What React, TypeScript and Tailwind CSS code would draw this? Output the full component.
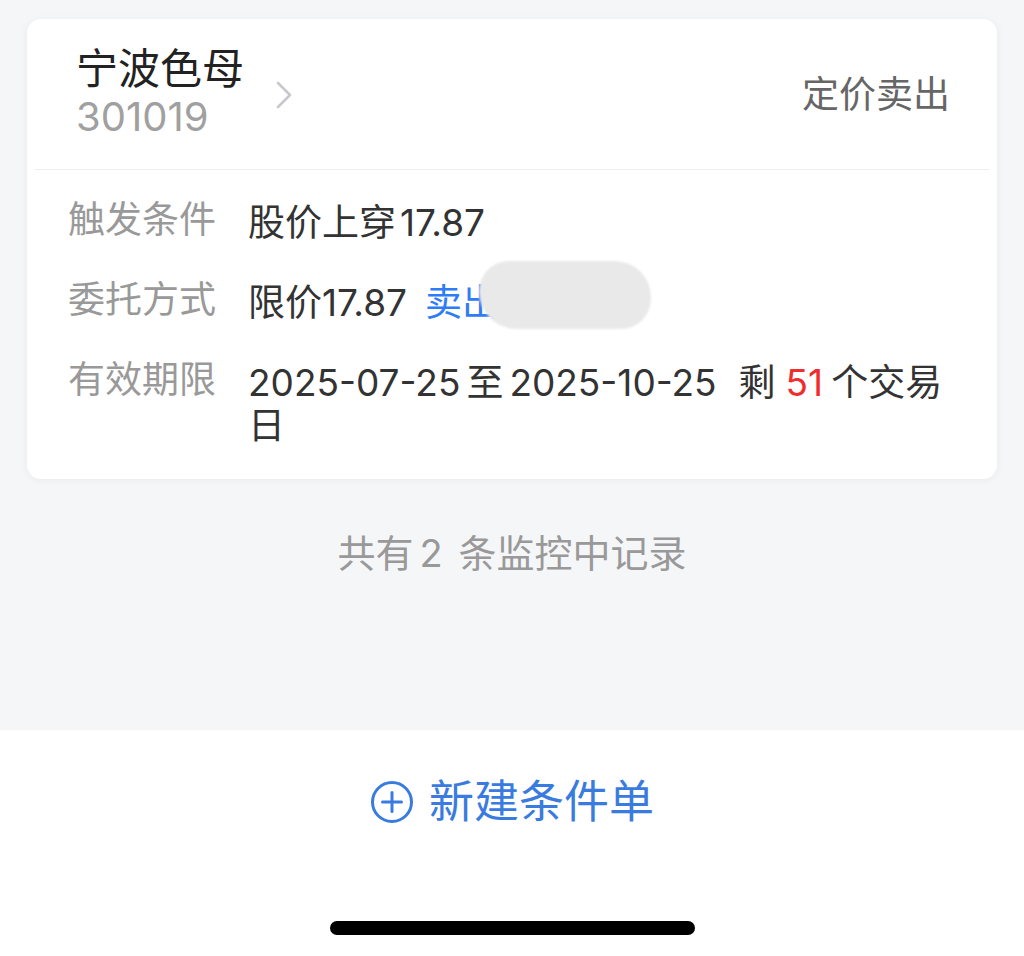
const FONT = "font-['Inter','Noto_Sans_CJK_SC',sans-serif]";

function InfoRow({ label, children }: { label: string; children: React.ReactNode }) {
  return (
    <div className="flex items-start">
      <div className="w-[180px] shrink-0 text-[37px] leading-[44px] text-[#999]">{label}</div>
      <div className="min-w-0 flex-1 pt-[3px] text-[37px] leading-[43px] text-[#333]">{children}</div>
    </div>
  );
}

function PlusCircle() {
  return (
    <svg width="44" height="44" viewBox="0 0 44 44" fill="none" stroke="#3a7be0" strokeWidth="3" strokeLinecap="round">
      <circle cx="22" cy="22" r="19.5" />
      <path d="M22 12.5v19M12.5 22h19" />
    </svg>
  );
}

export default function App() {
  return (
    <div className={`flex h-[956px] w-full flex-col bg-[#f5f6f8] ${FONT}`}>
      <div className="flex-1 px-[27px] pt-[19px]">
        <div className="rounded-[14px] bg-white shadow-[0_1px_8px_rgba(0,0,0,0.05)]">
          <div className="flex items-center justify-between py-[27px] pl-[49px] pr-[47px]">
            <div className="flex items-center">
              <div>
                <div className="text-[42px] leading-[46px] text-[#222]">宁波色母</div>
                <div className="text-[40px] leading-[50px] text-[#a0a0a0]">301019</div>
              </div>
              <svg className="ml-[31px] mt-[2px]" width="18" height="30" viewBox="0 0 18 30" fill="none">
                <path d="M3 3l12 12L3 27" stroke="#c8c8cc" strokeWidth="2.6" strokeLinecap="round" strokeLinejoin="round" />
              </svg>
            </div>
            <div className="pt-[2px] text-[37px] leading-[44px] text-[#666]">定价卖出</div>
          </div>
          <div className="mx-[8px] h-px bg-[#f0f0f0]" />
          <div className="flex flex-col gap-[34px] pb-[32px] pl-[41px] pr-[40px] pt-[28px]">
            <InfoRow label="触发条件">
              股价上穿<span className="ml-[4px]">17.87</span>
            </InfoRow>
            <InfoRow label="委托方式">
              限价17.87
              <span className="relative ml-[18px] text-[#2f7cf6]">
                卖出
                <span className="absolute left-[54px] top-[-19px] h-[68px] w-[172px] rounded-[40px_48px_40px_50px] bg-[#e9e9e9] blur-[1px]" />
              </span>
            </InfoRow>
            <InfoRow label="有效期限">
              2025-07-25<span className="mx-[6px]">至</span>2025-10-25<span className="ml-[22px] mr-[10px]">剩</span>
              <span className="mr-[8px] text-[#f02c2c]">51</span>个交易日
            </InfoRow>
          </div>
        </div>
        <div className="mt-[52px] text-center text-[38px] leading-[44px] text-[#999]">
          共有<span className="ml-[6px] mr-[16px]">2</span>条监控中记录
        </div>
      </div>
      <div className="flex h-[226px] flex-col items-center bg-white">
        <div className="mt-[46px] flex items-center gap-[15px]">
          <PlusCircle />
          <span className="text-[45px] leading-[52px] text-[#3a7be0]">新建条件单</span>
        </div>
        <div className="mt-[93px] h-[14px] w-[365px] rounded-full bg-black" />
      </div>
    </div>
  );
}
